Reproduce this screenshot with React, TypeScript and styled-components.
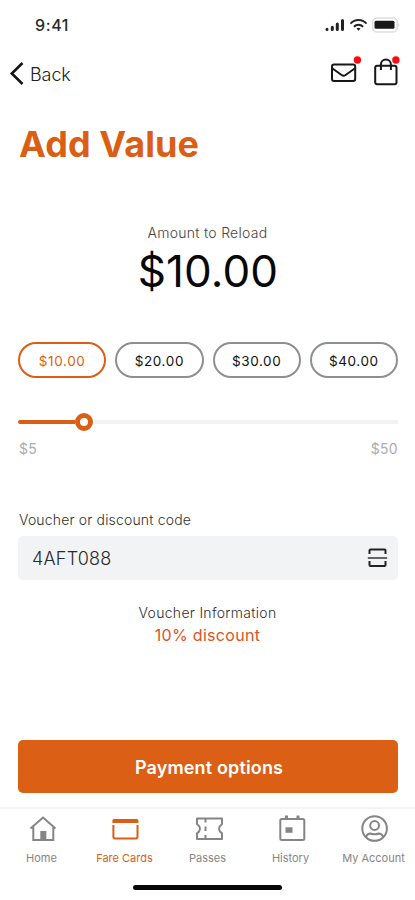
import React from "react";
import styled, { createGlobalStyle } from "styled-components";

const orange = "#da5f14";

const GlobalStyle = createGlobalStyle`
  * { box-sizing: border-box; }
  body { margin: 0; background: #fff; }
  button { font: inherit; color: inherit; background: none; border: 0; padding: 0; margin: 0; cursor: pointer; }
`;

const Screen = styled.main`
  width: 415px;
  height: 900px;
  overflow: hidden;
  display: flex;
  flex-direction: column;
  background: #fff;
  color: #151515;
  font-family: Inter, "Liberation Sans", sans-serif;
  svg { display: block; flex: none; overflow: visible; }
`;

const StatusBar = styled.div`
  height: 50px;
  padding: 0 15px 0 35px;
  display: flex;
  align-items: center;
  justify-content: space-between;
`;

const Clock = styled.span`
  font-size: 16px;
  font-weight: 500;
  letter-spacing: 0.6px;
  color: #2a2a2a;
`;

const StatusIcons = styled.div`
  display: flex;
  align-items: center;
  gap: 5px;
`;

const TopBar = styled.header`
  height: 48px;
  padding: 0 15px 0 9px;
  display: flex;
  align-items: center;
  justify-content: space-between;
`;

const BackButton = styled.button`
  display: flex;
  align-items: center;
  gap: 6px;
  span {
    font-size: 18px;
    font-weight: 300;
    letter-spacing: -0.1px;
    color: #222;
  }
`;

const Actions = styled.div`
  display: flex;
  gap: 11px;
  margin-bottom: 4px;
`;

const Title = styled.h1`
  margin: 24px 0 1px 19px;
  font-size: 36px;
  line-height: 44px;
  font-weight: 700;
  letter-spacing: 0.1px;
  color: ${orange};
`;

const Amount = styled.section`
  margin-top: 56px;
  text-align: center;
`;

const AmountLabel = styled.div`
  font-size: 14px;
  line-height: 20px;
  font-weight: 300;
  letter-spacing: 0.27px;
  color: #444;
`;

const AmountValue = styled.div`
  padding-left: 1px;
  font-size: 44px;
  line-height: 56px;
  letter-spacing: 0.1px;
  color: #080808;
`;

const Chips = styled.div`
  margin: 43px 17px 0 18px;
  display: grid;
  grid-template-columns: repeat(4, 1fr);
  gap: 9px;
`;

const Chip = styled.button<{ $active?: boolean }>`
  && {
    height: 36px;
    border: 2px solid ${(p) => (p.$active ? orange : "#8c9093")};
    border-radius: 18px;
    color: ${(p) => (p.$active ? orange : "#111")};
    font-size: 13.5px;
    font-weight: 400;
    letter-spacing: 0.6px;
    padding-top: 1px;
  }
`;

const Slider = styled.div`
  height: 20px;
  margin: 33.5px 17px 0 18px;
  display: flex;
  align-items: center;
`;

const Fill = styled.div`
  width: 57px;
  height: 4px;
  border-radius: 2px 0 0 2px;
  background: ${orange};
`;

const Thumb = styled.div`
  width: 18px;
  height: 18px;
  border: 5.5px solid ${orange};
  border-radius: 50%;
  background: #fff;
`;

const Track = styled.div`
  flex: 1;
  margin-left: 2px;
  height: 4px;
  background: #f2f2f2;
`;

const Range = styled.div`
  margin: 7.5px 17px 0 19px;
  display: flex;
  justify-content: space-between;
  font-size: 14px;
  line-height: 20px;
  letter-spacing: 0.3px;
  color: #acacac;
`;

const FieldLabel = styled.label`
  margin: 51px 0 0 19px;
  font-size: 14px;
  line-height: 20px;
  font-weight: 300;
  letter-spacing: 0.17px;
  color: #303030;
`;

const Field = styled.div`
  margin: 6px 17px 0 18px;
  height: 44px;
  padding: 0 11px 0 14px;
  border-radius: 5px;
  background: #f1f3f4;
  display: flex;
  align-items: center;
  justify-content: space-between;
`;

const Code = styled.span`
  font-size: 18px;
  font-weight: 350;
  letter-spacing: 0.2px;
  color: #2a2a2a;
`;

const Info = styled.section`
  margin-top: 23px;
  text-align: center;
`;

const InfoLabel = styled.div`
  font-size: 14px;
  line-height: 20px;
  font-weight: 300;
  letter-spacing: 0.3px;
  color: #303030;
`;

const Discount = styled.div`
  margin: 1px 0;
  font-size: 16px;
  line-height: 22px;
  letter-spacing: 0.3px;
  color: #dd5325;
`;

const PayButton = styled.button`
  && {
    height: 53px;
    margin: 93px 17px 0 18px;
    padding: 2px 0 0 2px;
    border-radius: 5px;
    background: #db6015;
    color: #fff;
    font-size: 18px;
    font-weight: 600;
    letter-spacing: 0.15px;
  }
`;

const TabBar = styled.nav`
  height: 70px;
  margin-top: 14px;
  border-top: 2px solid #f3f3f3;
  display: grid;
  grid-template-columns: repeat(5, 83px);
`;

const Tab = styled.button<{ $active?: boolean }>`
  && {
    padding-top: 5px;
    display: flex;
    flex-direction: column;
    align-items: center;
    gap: 6px;
    color: ${(p) => (p.$active ? orange : "#858585")};
    font-size: 11px;
    line-height: 16px;
    font-weight: 400;
    letter-spacing: 0;
    white-space: nowrap;
  }
`;

const HomeIndicator = styled.div`
  width: 149px;
  height: 5px;
  margin: 8px auto 0;
  border-radius: 3px;
  background: #080808;
`;

const SignalIcon = () => (
  <svg width="20" height="14" viewBox="0 0 20 14" fill="none" stroke="#222" strokeWidth="3" strokeLinecap="round">
    <path d="M3 11.3v.2M8.3 9.2v2.300M13.300 6v5.500M18.500 2.500v9" />
  </svg>
);

const WifiIcon = () => (
  <svg width="18" height="14" viewBox="0 0 18 14" fill="none" stroke="#222" strokeWidth="2">
    <path d="M1.500 5.600C6 .8 13 .8 17.500 5.600M4.900 8.800c2.700-2.600 6.500-2.600 9.200 0" />
    <path d="M9.500 12.800l-2-2.300c1.200-1 2.800-1 4 0z" fill="#222" stroke="none" />
  </svg>
);

const BatteryIcon = () => (
  <svg width="28" height="16" viewBox="0 0 28 16">
    <rect x=".7" y="1" width="24.500" height="14" rx="4" fill="#fff" stroke="#dedede" strokeWidth="1.500" />
    <rect x="2.500" y="3.800" width="20" height="8" rx="1.500" fill="#191919" />
    <path d="M26.500 6v4q1.800-2 0-4z" fill="#bbb" />
  </svg>
);

const BackIcon = () => (
  <svg width="15" height="24" viewBox="0 0 15 24" fill="none" stroke="#151515" strokeWidth="2.600">
    <path d="M13.500 1 2.800 11.500l10.700 10.500" />
  </svg>
);

const MailIcon = () => (
  <svg width="32" height="32" viewBox="0 0 32 32" fill="none" stroke="#171717" strokeWidth="2" strokeLinejoin="round">
    <rect x="4" y="8.500" width="23.200" height="16.500" rx="2" />
    <path d="m4.500 12.500 9.100 6.500q2 1.400 4 0l9.100-6.500" />
    <circle cx="29.400" cy="4" r="3.700" fill="#f80b13" stroke="none" />
  </svg>
);

const BagIcon = () => (
  <svg width="29" height="32" viewBox="0 0 29 32" fill="none" stroke="#171717" strokeWidth="2" strokeLinejoin="round">
    <rect x="4.200" y="9.800" width="21.300" height="18.400" rx="2" />
    <path d="M9.900 14V8.500a5 5 0 0 1 10 0V14" />
    <circle cx="24.900" cy="4" r="3.700" fill="#f80b13" stroke="none" />
  </svg>
);

const ScanIcon = () => (
  <svg width="20" height="20" viewBox="0 0 20 20" fill="none" stroke="#222" strokeWidth="2">
    <path d="M2.500 6V2.500q0-1 1-1h14q1 0 1 1V6M2.500 13v4q0 1 1 1h14q1 0 1-1v-4" />
    <path d="M.8 10h19.400" stroke="#555" strokeWidth="1.800" />
  </svg>
);

const HomeIcon = () => (
  <svg width="30" height="30" viewBox="0 0 30 30" fill="none" stroke="currentColor" strokeWidth="2">
    <path d="m3.500 14.600 12.500-11 12.500 11M6.300 12.500V26h20V12.500" />
    <path d="M13.300 17h6V26h-6z" fill="currentColor" stroke="none" />
  </svg>
);

const CardIcon = () => (
  <svg width="30" height="30" viewBox="0 0 30 30" fill="none" stroke="currentColor" strokeWidth="2">
    <path d="M2.400 9V6.500Q2.400 5 3.900 5h23q1.500 0 1.500 1.500V9z" fill="currentColor" stroke="none" />
    <path d="M3.400 11v11.700q0 1.800 1.800 1.800h20.500q1.800 0 1.800-1.800V11" />
  </svg>
);

const PassIcon = () => (
  <svg width="30" height="30" viewBox="0 0 30 30" fill="none" stroke="currentColor" strokeWidth="2">
    <path d="M4 4.500h25v5.500q-6 4.700 0 9.400V25H4v-5.600q6-4.700 0-9.400z" strokeLinejoin="round" />
    <path d="M12.500 5v3.500M12.500 12.500v4.500M12.500 21v3.500" />
  </svg>
);

const HistoryIcon = () => (
  <svg width="30" height="30" viewBox="0 0 30 30" fill="none" stroke="currentColor" strokeWidth="2">
    <rect x="4.300" y="5" width="24" height="21" rx="1.500" />
    <path d="M10.500 1.500v4M22 1.500v4" strokeWidth="3" />
    <path d="M9.500 13.300h7v5.500h-7z" fill="currentColor" stroke="none" />
  </svg>
);

const AccountIcon = () => (
  <svg width="30" height="30" viewBox="0 0 30 30" fill="none" stroke="currentColor" strokeWidth="2">
    <circle cx="15.600" cy="14.500" r="12.300" />
    <circle cx="15.600" cy="11.500" r="4.400" />
    <path d="M6.900 22.800q1.500-3.300 4.500-3.300 2 .8 4.200.8t4.200-.8q3 0 4.500 3.300" />
  </svg>
);

const amounts = ["$10.00", "$20.00", "$30.00", "$40.00"];

const tabs = [
  { label: "Home", Icon: HomeIcon },
  { label: "Fare Cards", Icon: CardIcon },
  { label: "Passes", Icon: PassIcon },
  { label: "History", Icon: HistoryIcon },
  { label: "My Account", Icon: AccountIcon },
];

export default function App() {
  return (
    <>
      <GlobalStyle />
      <Screen>
        <StatusBar>
          <Clock>9:41</Clock>
          <StatusIcons>
            <SignalIcon />
            <WifiIcon />
            <BatteryIcon />
          </StatusIcons>
        </StatusBar>
        <TopBar>
          <BackButton>
            <BackIcon />
            <span>Back</span>
          </BackButton>
          <Actions>
            <MailIcon />
            <BagIcon />
          </Actions>
        </TopBar>
        <Title>Add Value</Title>
        <Amount>
          <AmountLabel>Amount to Reload</AmountLabel>
          <AmountValue>$10.00</AmountValue>
        </Amount>
        <Chips>
          {amounts.map((a, i) => (
            <Chip key={a} $active={i === 0}>{a}</Chip>
          ))}
        </Chips>
        <Slider>
          <Fill />
          <Thumb />
          <Track />
        </Slider>
        <Range>
          <span>$5</span>
          <span>$50</span>
        </Range>
        <FieldLabel>Voucher or discount code</FieldLabel>
        <Field>
          <Code>4AFT088</Code>
          <ScanIcon />
        </Field>
        <Info>
          <InfoLabel>Voucher Information</InfoLabel>
          <Discount>10% discount</Discount>
        </Info>
        <PayButton>Payment options</PayButton>
        <TabBar>
          {tabs.map(({ label, Icon }) => (
            <Tab key={label} $active={label === "Fare Cards"}>
              <Icon />
              <span>{label}</span>
            </Tab>
          ))}
        </TabBar>
        <HomeIndicator />
      </Screen>
    </>
  );
}
